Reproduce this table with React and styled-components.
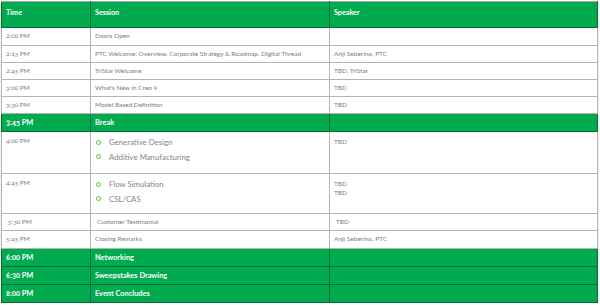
import React from "react";
import styled, { createGlobalStyle } from "styled-components";

const Global = createGlobalStyle`
  html, body {
    margin: 0;
    padding: 0;
    background: #ffffff;
  }
  body {
    padding: 1px 0 0 1px;
    font-family: "Lato", "Open Sans", sans-serif;
  }
`;

const rows = [
  { time: "2:00 PM", session: "Doors Open", speaker: "", h: 18 },
  { time: "2:15 PM", session: "PTC Welcome: Overview. Corporate Strategy & Roadmap. Digital Thread", speaker: "Anji Seberino, PTC", h: 17 },
  { time: "2:45 PM", session: "TriStar Welcome", speaker: "TBD, TriStar", h: 17 },
  { time: "3:00 PM", session: "What's New in Creo 9", speaker: "TBD", h: 17 },
  { time: "3:30 PM", session: "Model Based Definition", speaker: "TBD", h: 17 },
  { time: "3:45 PM", session: "Break", green: true, h: 18 },
  { time: "4:00 PM", list: ["Generative Design", "Additive Manufacturing"], speaker: ["TBD"], h: 42 },
  { time: "4:45 PM", list: ["Flow Simulation", "CSL/CAS"], speaker: ["TBD", "TBD"], h: 40 },
  { time: "5:30 PM", session: "Customer Testimonial", speaker: "TBD", h: 17, indent: true },
  { time: "5:45 PM", session: "Closing Remarks", speaker: "Anji Seberino, PTC", h: 18 },
  { time: "6:00 PM", session: "Networking", green: true, h: 18 },
  { time: "6:30 PM", session: "Sweepstakes Drawing", green: true, h: 18 },
  { time: "8:00 PM", session: "Event Concludes", green: true, h: 18 },
];

const Table = styled.table`
  width: 597px;
  border-collapse: collapse;
  table-layout: fixed;
  border: 1px solid #a9a9a9;
  box-shadow: 0 2px 2px #d8d8d8;
`;

const Row = styled.tr`
  height: ${(p) => p.$h}px;
  background: ${(p) => (p.$green ? "#00ab4f" : "#ffffff")};
`;

const Head = styled.th`
  background: #00ab4f;
  color: #ffffff;
  font-size: 7.2px;
  font-weight: 700;
  text-align: left;
  vertical-align: top;
  height: 26px;
  padding: 6px 4px 0 4px;
  box-sizing: border-box;
  border: 1px solid #0c6b34;
  border-top-color: #a9a9a9;
`;

const Cell = styled.td`
  padding: 0 4px 0 ${(p) => (p.$indent ? 6 : 4)}px;
  font-size: ${(p) => (p.$green ? 7.4 : 6.5)}px;
  font-weight: ${(p) => (p.$green ? 700 : 400)};
  color: ${(p) => (p.$green ? "#ffffff" : "#7d7d7d")};
  font-feature-settings: "onum";
  vertical-align: ${(p) => (p.$top ? "top" : "middle")};
  padding-top: ${(p) => (p.$top ? 5 : 0)}px;
  border: 1px solid ${(p) => (p.$green ? "#0c6b34" : "#b4b4b4")};
  white-space: nowrap;
  overflow: hidden;
  line-height: 1.3;
`;

const List = styled.ul`
  list-style: none;
  margin: -2px 0 0 0;
  padding: 0 0 0 1px;
`;

const Item = styled.li`
  display: flex;
  align-items: center;
  gap: 8px;
  font-size: 7.8px;
  color: #858585;
  height: 14.5px;
`;

const Dot = styled.span`
  width: 3px;
  height: 3px;
  border: 1.3px solid #5cbf3e;
  border-radius: 50%;
  flex: none;
`;

const Line = styled.div`
  line-height: 9px;
`;

export default function App() {
  return (
    <>
      <Global />
      <Table>
        <colgroup>
          <col style={{ width: 89 }} />
          <col style={{ width: 239 }} />
          <col />
        </colgroup>
        <thead>
          <tr>
            <Head>Time</Head>
            <Head>Session</Head>
            <Head>Speaker</Head>
          </tr>
        </thead>
        <tbody>
          {rows.map((r) => (
            <Row key={r.time} $h={r.h} $green={r.green}>
              <Cell $green={r.green} $top={!!r.list} $indent={r.indent}>
                {r.time}
              </Cell>
              <Cell $green={r.green} $top={!!r.list} $indent={r.indent}>
                {r.list ? (
                  <List>
                    {r.list.map((i) => (
                      <Item key={i}>
                        <Dot />
                        {i}
                      </Item>
                    ))}
                  </List>
                ) : (
                  r.session
                )}
              </Cell>
              <Cell $green={r.green} $top={!!r.list} $indent={r.indent}>
                {Array.isArray(r.speaker)
                  ? r.speaker.map((s, n) => <Line key={n}>{s}</Line>)
                  : r.speaker}
              </Cell>
            </Row>
          ))}
        </tbody>
      </Table>
    </>
  );
}
